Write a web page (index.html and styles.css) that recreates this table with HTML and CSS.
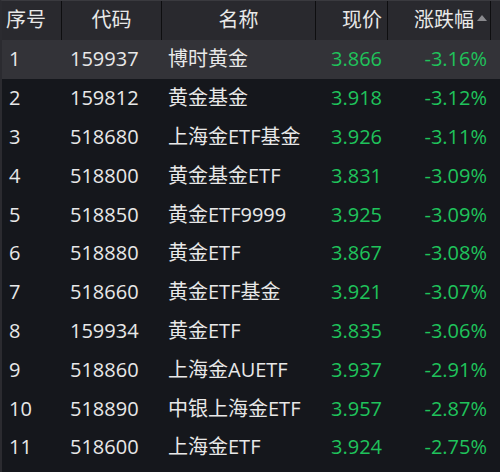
FILE: index.html
```html
<!DOCTYPE html>
<html lang="zh">
<head>
<meta charset="utf-8">
<link rel="stylesheet" href="styles.css">
</head>
<body>
<div class="table">
  <div class="row head">
    <div class="c c1">序号</div>
    <div class="c c2 center">代码</div>
    <div class="c c3 center">名称</div>
    <div class="c c4 right">现价</div>
    <div class="c c5 right">涨跌幅<span class="tri"></span></div>
    <div class="c c6"></div>
  </div>
  <div class="row sel"><div class="c c1">1</div><div class="c c2">159937</div><div class="c c3">博时黄金</div><div class="c c4 right g">3.866</div><div class="c c5 right g">-3.16%</div></div>
  <div class="row"><div class="c c1">2</div><div class="c c2">159812</div><div class="c c3">黄金基金</div><div class="c c4 right g">3.918</div><div class="c c5 right g">-3.12%</div></div>
  <div class="row"><div class="c c1">3</div><div class="c c2">518680</div><div class="c c3">上海金ETF基金</div><div class="c c4 right g">3.926</div><div class="c c5 right g">-3.11%</div></div>
  <div class="row"><div class="c c1">4</div><div class="c c2">518800</div><div class="c c3">黄金基金ETF</div><div class="c c4 right g">3.831</div><div class="c c5 right g">-3.09%</div></div>
  <div class="row"><div class="c c1">5</div><div class="c c2">518850</div><div class="c c3">黄金ETF9999</div><div class="c c4 right g">3.925</div><div class="c c5 right g">-3.09%</div></div>
  <div class="row"><div class="c c1">6</div><div class="c c2">518880</div><div class="c c3">黄金ETF</div><div class="c c4 right g">3.867</div><div class="c c5 right g">-3.08%</div></div>
  <div class="row"><div class="c c1">7</div><div class="c c2">518660</div><div class="c c3">黄金ETF基金</div><div class="c c4 right g">3.921</div><div class="c c5 right g">-3.07%</div></div>
  <div class="row"><div class="c c1">8</div><div class="c c2">159934</div><div class="c c3">黄金ETF</div><div class="c c4 right g">3.835</div><div class="c c5 right g">-3.06%</div></div>
  <div class="row"><div class="c c1">9</div><div class="c c2">518860</div><div class="c c3">上海金AUETF</div><div class="c c4 right g">3.937</div><div class="c c5 right g">-2.91%</div></div>
  <div class="row"><div class="c c1">10</div><div class="c c2">518890</div><div class="c c3">中银上海金ETF</div><div class="c c4 right g">3.957</div><div class="c c5 right g">-2.87%</div></div>
  <div class="row"><div class="c c1">11</div><div class="c c2">518600</div><div class="c c3">上海金ETF</div><div class="c c4 right g">3.924</div><div class="c c5 right g">-2.75%</div></div>
</div>
</body>
</html>
```
FILE: styles.css
```css
html, body {
  margin: 0;
  padding: 0;
  background: #15171c;
}
.table {
  width: 500px;
  height: 472px;
  box-sizing: border-box;
  border-left: 2px solid #2b2b30;
  border-top: 1px solid #3a3a3f;
  background: #15171c;
  font-family: "Open Sans", "Noto Sans CJK SC", sans-serif;
  font-size: 20px;
  color: #e8e8e8;
  overflow: hidden;
}
.row {
  display: grid;
  grid-template-columns: 60px 100px 154px 72px 103px 9px;
  height: 38.8px;
  align-items: center;
}
.row.head {
  height: 39px;
  background: #29292e;
  align-items: stretch;
}
.head .c {
  border-right: 1px solid #0e0e10;
  display: flex;
  align-items: center;
  padding-bottom: 2px;
}
.head .c6 { border-right: none; }
.head .c1 { padding-left: 4px; }
.head .center { justify-content: center; }
.head .c4 { justify-content: flex-end; padding-right: 5px; }
.head .c5 { justify-content: flex-end; padding-right: 3px; }
.row.sel {
  background: #333338;
}
.c {
  white-space: nowrap;
  line-height: 1;
}
.row:not(.head) .c1 { padding-left: 7px; }
.row:not(.head) .c2 { padding-left: 8px; }
.row:not(.head) .c3 { padding-left: 6px; }
.row:not(.head) .c4 { text-align: right; padding-right: 6px; }
.row:not(.head) .c5 { text-align: right; padding-right: 4px; }
.g { color: #1fc35b; }
.tri {
  display: inline-block;
  width: 0;
  height: 0;
  border-left: 5px solid transparent;
  border-right: 5px solid transparent;
  border-bottom: 6px solid #8a8a8e;
  margin-left: 3px;
  margin-bottom: 4px;
}
```
